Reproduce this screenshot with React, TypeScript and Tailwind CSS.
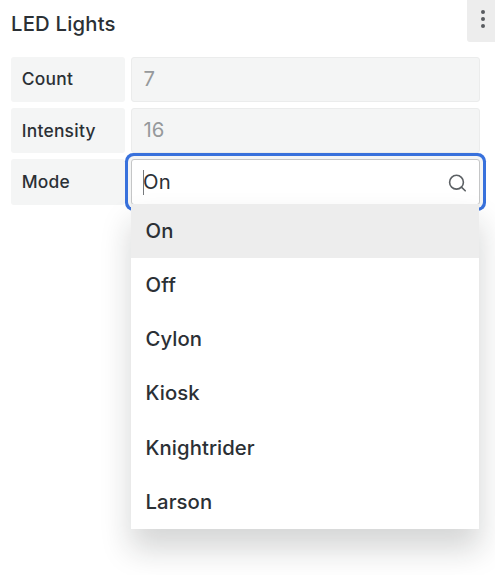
import React from "react";

const modes = ["On", "Off", "Cylon", "Kiosk", "Knightrider", "Larson"];

function Label({ children }: { children: React.ReactNode }) {
  return (
    <div className="flex h-[45.5px] w-[114.5px] shrink-0 items-center rounded-[3px] bg-[#f4f5f5] pl-[11.2px] text-[17.4px] font-[470] tracking-[0.26px] text-[#2b3035]">
      {children}
    </div>
  );
}

function DisabledField({ value }: { value: string }) {
  return (
    <div className="flex h-[45.5px] w-[349.4px] items-center rounded-[3px] border border-[#ebecec] bg-[#f4f5f5] pl-[11.8px] text-[20.3px] tracking-[0.2px] text-[#96999b]">
      {value}
    </div>
  );
}

export default function App() {
  return (
    <div className="h-[575px] w-[501px] bg-white font-['Inter',sans-serif] text-[#2b3035]">
      <div className="relative h-full w-[495px] overflow-hidden">
        <header className="flex h-[56.5px] items-start justify-between pl-[11px]">
          <h1 className="pt-[8.5px] text-[20.3px] leading-[30px] font-[470] tracking-[0.2px]">LED Lights</h1>
          <button className="flex h-[41.5px] w-[28.5px] flex-col items-center gap-[2.7px] rounded-bl-[3px] bg-[#ededed] pt-[10.3px] pl-[5px]">
            <span className="size-[4px] rounded-full bg-[#595c60]" />
            <span className="size-[4px] rounded-full bg-[#595c60]" />
            <span className="size-[4px] rounded-full bg-[#595c60]" />
          </button>
        </header>
        <div className="flex flex-col gap-[5.9px] pl-[10.5px]">
          <div className="flex gap-[5.6px]">
            <Label>Count</Label>
            <DisabledField value="7" />
          </div>
          <div className="flex gap-[5.6px]">
            <Label>Intensity</Label>
            <DisabledField value="16" />
          </div>
          <div className="flex gap-[5.6px]">
            <Label>Mode</Label>
            <div className="relative h-[45.5px] w-[349.4px] rounded-[3px] border border-[#c5c6c7] bg-white shadow-[0_0_0_3px_#f4f5f5,0_0_0_6px_#3871dc]">
              <div className="flex h-full items-center justify-between pr-[12.4px] pl-[11.4px] text-[20.3px]">
                <div className="flex items-center">
                  <span className="-mr-px h-[25px] w-px bg-[#777a7d]" />
                  <span className="tracking-[0.2px]">On</span>
                </div>
                <svg className="mt-[3px] size-[19px]" viewBox="0 0 19 19" fill="none" stroke="#5c6064" strokeWidth="1.6" strokeLinecap="round">
                  <circle cx="8.5" cy="8.2" r="6.9" />
                  <path d="M13.4 13.1 L17.2 16.8" />
                </svg>
              </div>
              <ul className="absolute top-[43.5px] -left-[0.4px] w-[347.8px] bg-white shadow-[0_19px_29px_1.5px_rgba(24,26,27,0.18)]">
                {modes.map((mode) => (
                  <li
                    key={mode}
                    className="flex h-[54.25px] items-center pl-[14.4px] text-[20.3px] font-[470] tracking-[0.06px] first:mb-[0.45px] first:h-[53.8px] first:bg-[#ededed] first:pt-[1px]"
                  >
                    {mode}
                  </li>
                ))}
              </ul>
            </div>
          </div>
        </div>
      </div>
    </div>
  );
}
